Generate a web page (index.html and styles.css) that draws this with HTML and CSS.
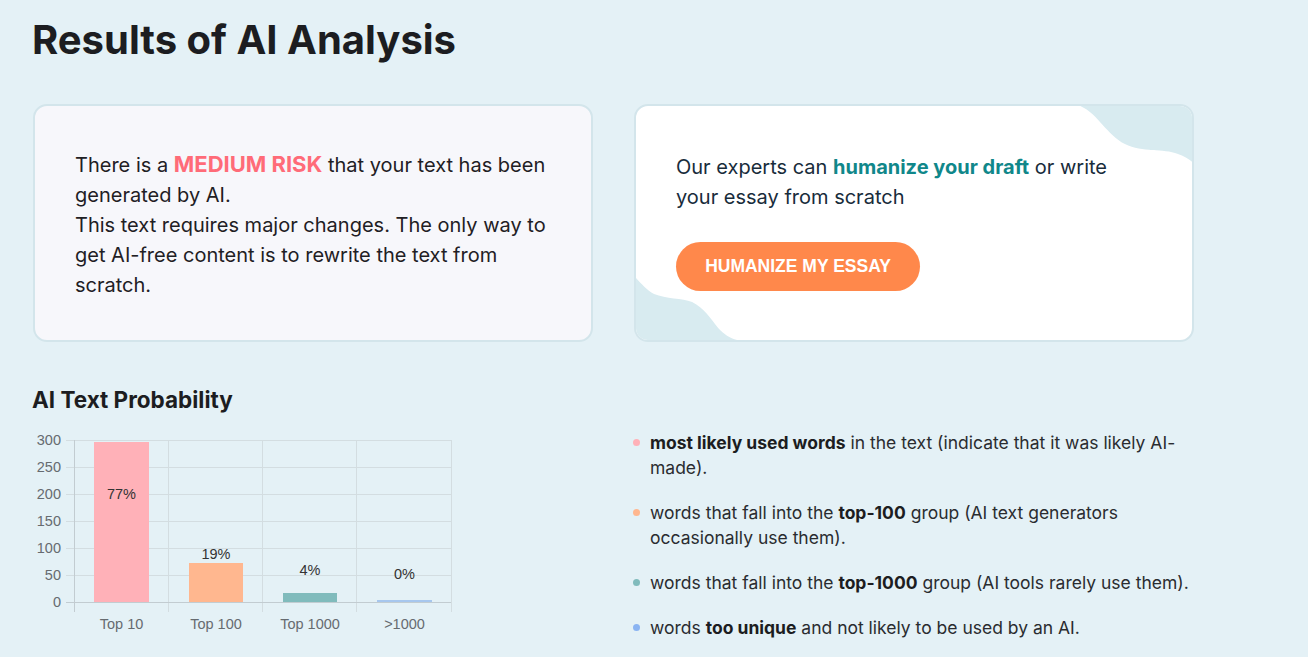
FILE: index.html
```html
<!DOCTYPE html>
<html lang="en">
<head>
<meta charset="utf-8">
<title>Results of AI Analysis</title>
<link rel="stylesheet" href="styles.css">
</head>
<body>
<main class="page">
  <h1 class="title">Results of AI Analysis</h1>
  <section class="cards">
    <div class="card card-risk">
      <p class="risk-text">There is a <strong class="risk">MEDIUM RISK</strong> that your text has been generated by AI.<br>This text requires major changes. The only way to get AI-free content is to rewrite the text from scratch.</p>
    </div>
    <div class="card card-cta">
      <svg class="blobs" viewBox="0 0 559 238" preserveAspectRatio="none" aria-hidden="true">
        <path d="M440 0 C462 6 470 30 490 40 C508 49 528 44 543 50 C551 53 556 56 559 60 L559 0 Z" fill="#d8ebf0"/>
        <path d="M0 172 C6 178 12 186 20 190 C32 195 48 194 58 198 C70 204 76 214 84 224 C92 233 100 236 112 238 L0 238 Z" fill="#d8ebf0"/>
      </svg>
      <div class="cta-body">
        <p class="cta-text">Our experts can <strong class="accent">humanize your draft</strong> or write your essay from scratch</p>
        <button class="btn">HUMANIZE MY ESSAY</button>
      </div>
    </div>
  </section>
  <section class="prob">
    <div class="chart-col">
      <h2 class="subtitle">AI Text Probability</h2>
      <svg class="chart" width="430" height="210" viewBox="0 0 430 210">
        <g stroke="#d3dde1" stroke-width="1">
          <line x1="34" y1="10.5" x2="419" y2="10.5"/>
          <line x1="34" y1="37.5" x2="419" y2="37.5"/>
          <line x1="34" y1="64.5" x2="419" y2="64.5"/>
          <line x1="34" y1="91.5" x2="419" y2="91.5"/>
          <line x1="34" y1="118.5" x2="419" y2="118.5"/>
          <line x1="34" y1="145.5" x2="419" y2="145.5"/>
          <line x1="136.5" y1="10" x2="136.5" y2="182"/>
          <line x1="230.5" y1="10" x2="230.5" y2="182"/>
          <line x1="324.5" y1="10" x2="324.5" y2="182"/>
          <line x1="419.5" y1="10" x2="419.5" y2="182"/>
        </g>
        <g stroke="#c2ccd1" stroke-width="1">
          <line x1="42.5" y1="10" x2="42.5" y2="182"/>
          <line x1="34" y1="172.5" x2="419" y2="172.5"/>
        </g>
        <rect x="62" y="12" width="55" height="160" fill="#ffb1b8"/>
        <rect x="157" y="133" width="54" height="39" fill="#ffb78f"/>
        <rect x="251" y="163" width="54" height="9" fill="#80bbbc"/>
        <rect x="345" y="170" width="55" height="2" fill="#a7c7ee"/>
        <g class="ylab" text-anchor="end">
          <text x="29" y="15">300</text>
          <text x="29" y="42">250</text>
          <text x="29" y="69">200</text>
          <text x="29" y="96">150</text>
          <text x="29" y="123">100</text>
          <text x="29" y="150">50</text>
          <text x="29" y="177">0</text>
        </g>
        <g class="xlab" text-anchor="middle">
          <text x="89.5" y="199">Top 10</text>
          <text x="184" y="199">Top 100</text>
          <text x="278" y="199">Top 1000</text>
          <text x="372.5" y="199">&gt;1000</text>
        </g>
        <g class="vlab" text-anchor="middle">
          <text x="89.5" y="69">77%</text>
          <text x="184" y="129">19%</text>
          <text x="278" y="145">4%</text>
          <text x="372.5" y="149">0%</text>
        </g>
      </svg>
    </div>
    <ul class="legend">
      <li><span class="dot dot-pink"></span><span><b>most likely used words</b> in the text (indicate that it was likely AI-made).</span></li>
      <li><span class="dot dot-orange"></span><span>words that fall into the <b>top-100</b> group (AI text generators occasionally use them).</span></li>
      <li><span class="dot dot-teal"></span><span>words that fall into the <b>top-1000</b> group (AI tools rarely use them).</span></li>
      <li><span class="dot dot-blue"></span><span>words <b>too unique</b> and not likely to be used by an AI.</span></li>
    </ul>
  </section>
</main>
</body>
</html>
```

FILE: styles.css
```css
* { box-sizing: border-box; }
html, body { margin: 0; padding: 0; }
body {
  background: #e4f1f6;
  font-family: Inter, "Noto Sans", sans-serif;
  color: #1f2024;
}
.page {
  width: 1225px;
  padding: 14px 32px 0 32px;
}
.title {
  margin: 0;
  font-size: 40px;
  font-weight: 700;
  line-height: 52px;
  color: #1c1d21;
}
.cards {
  display: grid;
  grid-template-columns: 560px 560px;
  column-gap: 41px;
  margin-top: 38px;
  padding-left: 1px;
}
.card {
  height: 238px;
  border: 2px solid #d3e5eb;
  border-radius: 14px;
  display: flex;
  flex-direction: column;
  justify-content: center;
  padding: 0 40px;
}
.card-risk { background: #f7f7fb; padding-top: 4px; }
.risk-text {
  margin: 0;
  font-size: 20px;
  line-height: 30px;
  color: #1f2024;
}
.risk { color: #ff6b78; font-weight: 700; font-size: 22px; line-height: 20px; }
.card-cta {
  background: #ffffff;
  position: relative;
  overflow: hidden;
  padding-bottom: 4px;
}
.blobs {
  position: absolute;
  left: -2px;
  top: -2px;
  width: calc(100% + 4px);
  height: calc(100% + 4px);
}
.cta-body { position: relative; }
.cta-text {
  margin: 0 0 30px 0;
  font-size: 20px;
  line-height: 30px;
  color: #182c3b;
  max-width: 450px;
}
.accent { color: #10878a; font-weight: 700; }
.btn {
  display: block;
  width: 244px;
  height: 49px;
  border: none;
  border-radius: 25px;
  background: #ff884b;
  color: #ffffff;
  font-family: "Liberation Sans", Arial, sans-serif;
  font-weight: 700;
  font-size: 17.5px;
  padding: 0;
}
.prob {
  display: grid;
  grid-template-columns: 601px 560px;
  margin-top: 44px;
}
.subtitle {
  margin: 0;
  font-size: 22.5px;
  font-weight: 700;
  line-height: 28px;
  color: #1c1d21;
}
.chart { display: block; margin-top: 16px; }
.ylab text, .xlab text {
  font-family: "Liberation Sans", Arial, sans-serif;
  font-size: 14.5px;
  fill: #666b70;
}
.vlab text {
  font-family: "Liberation Sans", Arial, sans-serif;
  font-size: 14.5px;
  fill: #333333;
}
.legend {
  list-style: none;
  margin: 44px 0 0 0;
  padding: 0;
}
.legend li {
  display: flex;
  align-items: flex-start;
  gap: 10px;
  font-size: 17.5px;
  line-height: 25px;
  color: #2a2c30;
  margin-bottom: 20px;
}
.legend b { font-weight: 700; color: #1c1d21; }
.dot {
  flex: none;
  width: 7px;
  height: 7px;
  border-radius: 50%;
  margin-top: 9px;
}
.dot-pink { background: #ffb1b8; }
.dot-orange { background: #ffb78f; }
.dot-teal { background: #80bbbc; }
.dot-blue { background: #8ab4f2; }
```
